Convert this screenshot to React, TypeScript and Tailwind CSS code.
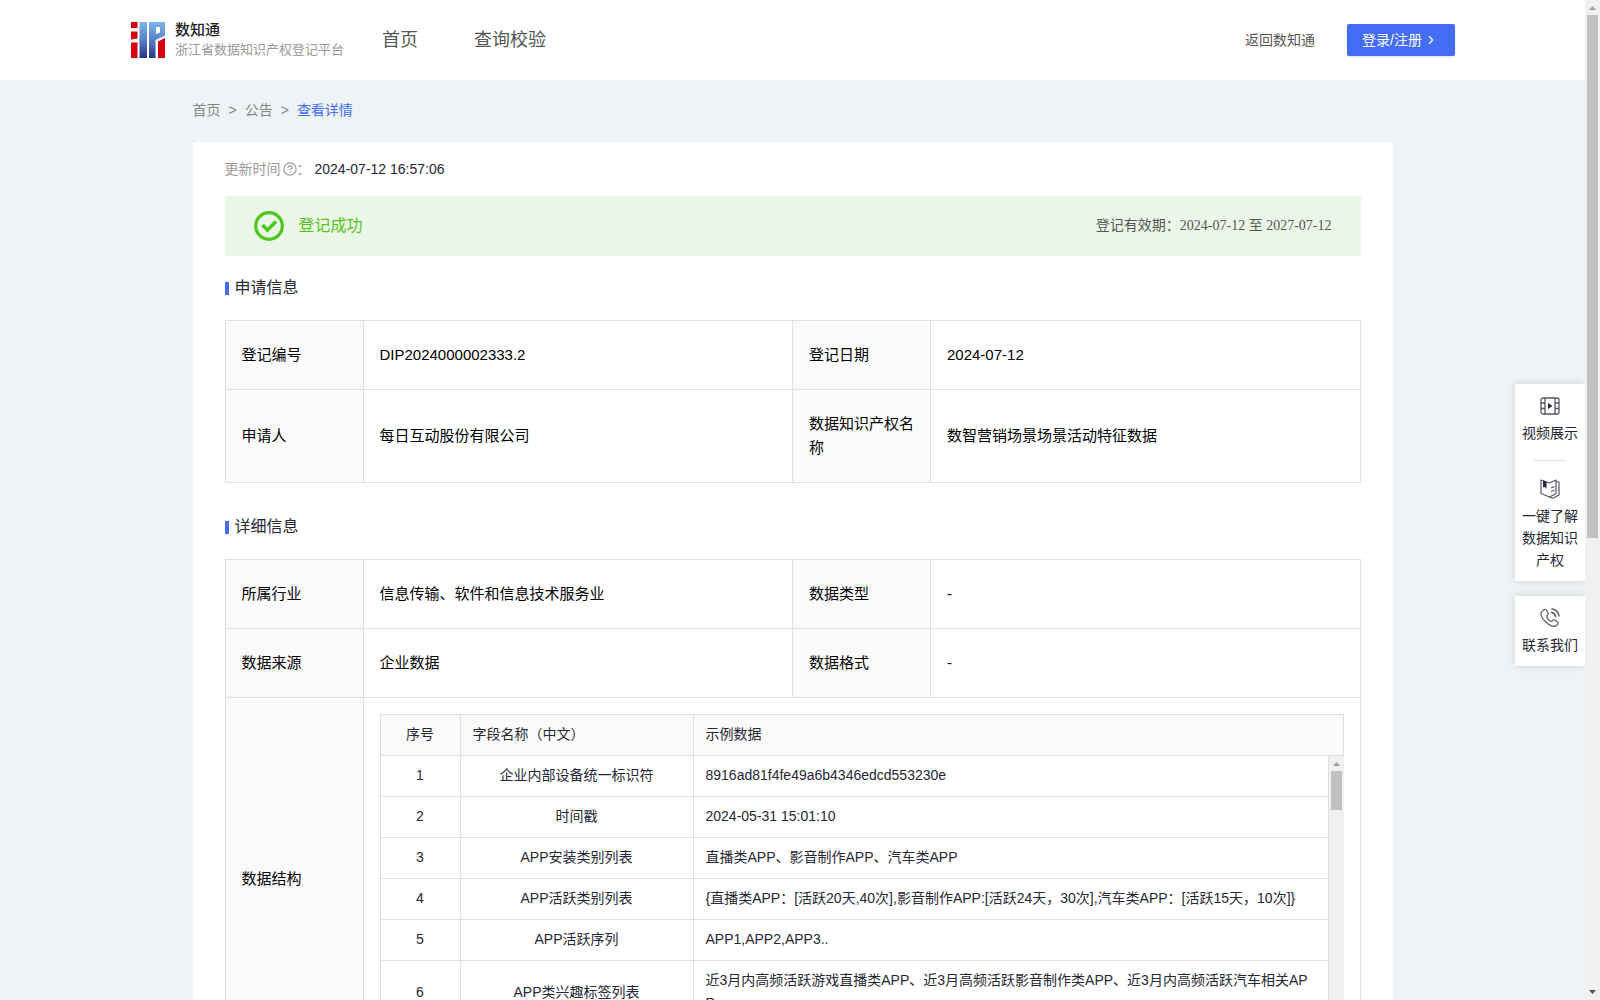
import React from 'react';
import { ChevronRight } from 'lucide-react';

const fields = [
  { name: '企业内部设备统一标识符', sample: '8916ad81f4fe49a6b4346edcd553230e' },
  { name: '时间戳', sample: '2024-05-31 15:01:10' },
  { name: 'APP安装类别列表', sample: '直播类APP、影音制作APP、汽车类APP' },
  { name: 'APP活跃类别列表', sample: '{直播类APP：[活跃20天,40次],影音制作APP:[活跃24天，30次],汽车类APP：[活跃15天，10次]}' },
  { name: 'APP活跃序列', sample: 'APP1,APP2,APP3..' },
  { name: 'APP类兴趣标签列表', sample: '近3月内高频活跃游戏直播类APP、近3月高频活跃影音制作类APP、近3月内高频活跃汽车相关APP' },
];

const Logo = () => (
  <svg viewBox="0 0 34 36" className="h-9 w-[34px] shrink-0" aria-hidden="true">
    <defs>
      <linearGradient id="logoBlue" gradientUnits="userSpaceOnUse" x1="0" y1="0" x2="0" y2="36">
        <stop offset="0" stopColor="#7fb4ee" />
        <stop offset="0.5" stopColor="#5580c6" />
        <stop offset="1" stopColor="#26378a" />
      </linearGradient>
    </defs>
    <path fill="#d7000f" d="M0 0h6.500v6H0zM0 9.500h6.500v7L0 17.500zM0 20.500h6.500V36H0z" />
    <path fill="url(#logoBlue)" d="M8.500 0h7.500v36H8.500z" />
    <path fill="url(#logoBlue)" fillRule="evenodd" d="M18 0h16v13.500l-9.500 4.500v18H18zM25 5v7l4-1.500V5z" />
    <path fill="#d7000f" d="M34 16v20h-7V19.500z" />
  </svg>
);

const VideoIcon = () => (
  <svg viewBox="0 0 20 20" className="h-5 w-5" fill="none" stroke="#55565f" strokeWidth="1.3" aria-hidden="true">
    <rect x="1" y="2" width="18" height="16" rx="2" />
    <path d="M5 2v16M15 2v16M1 7h4M1 12.500h4M15 7h4M15 12.500h4" />
    <path d="M8 7v6l4.500-3z" fill="#252733" stroke="none" />
  </svg>
);

const BookIcon = () => (
  <svg viewBox="0 0 20 20" className="h-5 w-5" fill="none" stroke="#55565f" strokeWidth="1.2" strokeLinejoin="round" aria-hidden="true">
    <path d="M1 1l8.500 3L16 1v13.500l-6.500 3.500L1 14.500z" />
    <path d="M16 2.500l3 .5v13l-6 3.300-3.500-1.300M11 9l3.500-1.500M11 12.500l3.500-1.500" />
    <path d="M3 1.500l3.500 1V10L5 8 3 8.500z" fill="#252733" stroke="none" />
  </svg>
);

const PhoneIcon = () => (
  <svg viewBox="0 0 20 20" className="h-5 w-5" fill="none" stroke="#55565f" strokeWidth="1.2" strokeLinecap="round" strokeLinejoin="round" aria-hidden="true">
    <path d="M3 2.500C5 .8 6 1.300 7 3l1 2c.6 1.300-.1 1.900-1 2.600-.8.7-.3 1.500.5 2.700 1 1.400 2.200 2.500 3.300 3 .9.400 1.300-.2 2-.9.800-.8 1.600-.7 2.500 0l2 1.500c1.200 1 1 2-.2 3.200-2 2-5 1.700-8.600-.9C3.500 12.500.8 8.500.9 5.500.9 4 1.800 3.400 3 2.500z" />
    <path d="M11.500 4.500c2 .3 3.700 2 4 4M12 1c3.700.2 6.800 3.300 7 7" strokeWidth="1.5" />
  </svg>
);

const Scrollbar = ({ thumb, arrowDown = false }: { thumb: string; arrowDown?: boolean }) => (
  <div className="flex w-[15px] shrink-0 flex-col items-center bg-[#f0f0f0]" aria-hidden="true">
    <svg viewBox="0 0 15 15" className="h-[15px] w-[15px]"><path d="M4 10l3.500-4L11 10z" fill="#a0a0a0" /></svg>
    <div className={`w-[11px] bg-[#c1c1c1] ${thumb}`} />
    {arrowDown && (
      <svg viewBox="0 0 15 15" className="mt-auto h-[15px] w-[15px]"><path d="M4 5l3.500 4L11 5z" fill="#505050" /></svg>
    )}
  </div>
);

const SectionTitle = ({ children }: { children: React.ReactNode }) => (
  <h2 className="flex items-center text-base leading-6 text-[#252733]">
    <span className="mr-1.5 h-[13px] w-1 bg-[#446df6]" />
    {children}
  </h2>
);

const Label = ({ children }: { children: React.ReactNode }) => (
  <th scope="row" className="border border-[#e0e0e2] bg-[#fafafa] px-4 py-[22px] text-left font-normal">
    {children}
  </th>
);

const Value = ({ children }: { children: React.ReactNode }) => (
  <td className="border border-[#e0e0e2] px-4 py-[22px]">{children}</td>
);

const Columns = () => (
  <colgroup>
    <col className="w-[138px]" />
    <col />
    <col className="w-[138px]" />
    <col />
  </colgroup>
);

const infoTable = 'w-full table-fixed border-collapse text-[15px] leading-6 text-black';

const App = () => {
  return (
    <div className="flex h-screen overflow-hidden bg-[#eef3f6] font-['Liberation_Sans','Noto_Sans_CJK_SC',sans-serif] text-sm text-[#252733]">
      <div className="relative min-w-0 flex-1 overflow-hidden">
        {/* Header */}
        <header className="flex h-20 items-center bg-white px-[130px]">
          <a href="#" className="ml-px flex items-center gap-2.5">
            <Logo />
            <span className="flex flex-col">
              <span className="text-[15px] font-medium leading-5 text-[#222]">数知通</span>
              <span className="text-[13px] leading-5 text-[#999]">浙江省数据知识产权登记平台</span>
            </span>
          </a>
          <nav className="ml-[38px] flex gap-14 text-lg text-[#555]">
            <a href="#">首页</a>
            <a href="#">查询校验</a>
          </nav>
          <div className="ml-auto flex items-center gap-8">
            <a href="#" className="text-[#555]">返回数知通</a>
            <button className="flex h-8 w-[108px] items-center rounded-xs bg-[#446df6] pl-[15px] text-white shadow-sm">
              登录/注册
              <ChevronRight className="ml-0.5 h-3.5 w-3.5" />
            </button>
          </div>
        </header>

        <main className="mx-auto max-w-[1200px]">
          {/* Breadcrumb */}
          <nav className="flex gap-2 pt-5 pb-[22px] leading-5 text-[#868686]">
            <a href="#">首页</a>
            <span>&gt;</span>
            <a href="#">公告</a>
            <span>&gt;</span>
            <a href="#" className="text-[#446df6]">查看详情</a>
          </nav>

          <div className="rounded bg-white px-8 pt-4">
            <div className="flex items-center leading-[22px]">
              <span className="text-[#999]">更新时间</span>
              <svg viewBox="0 0 16 16" className="ml-0.5 h-3.5 w-3.5" fill="none" stroke="#999" strokeWidth="1.4" aria-hidden="true">
                <circle cx="8" cy="8" r="7" />
                <path d="M5.800 6.500c0-3 4.400-2.800 4.400-.2C10.200 7.800 8 7.800 8 9.500M8 11v1.300" />
              </svg>
              <span className="text-[#999]">：</span>
              <span className="ml-1">2024-07-12 16:57:06</span>
            </div>

            {/* Status */}
            <div className="mt-4 flex h-[60px] items-center bg-[#ebf7e6] px-[29px]">
              <svg viewBox="0 0 30 30" className="h-[30px] w-[30px]" fill="none" stroke="#4dc61e" aria-hidden="true">
                <circle cx="15" cy="15" r="13.3" strokeWidth="3.2" />
                <path d="M8.500 14l5 5 8.500-8.500" strokeWidth="3.6" />
              </svg>
              <span className="ml-[15px] text-base text-[#52c41a]">登记成功</span>
              <span className="ml-auto font-['Liberation_Serif','Noto_Sans_CJK_SC',serif] text-[#555]">
                登记有效期：2024-07-12 至 2027-07-12
              </span>
            </div>

            <div className="pt-5 pb-5">
              <SectionTitle>申请信息</SectionTitle>
            </div>
            <table className={infoTable}>
              <Columns />
              <tbody>
                <tr>
                  <Label>登记编号</Label>
                  <Value>DIP2024000002333.2</Value>
                  <Label>登记日期</Label>
                  <Value>2024-07-12</Value>
                </tr>
                <tr>
                  <Label>申请人</Label>
                  <Value>每日互动股份有限公司</Value>
                  <Label>数据知识产权名称</Label>
                  <Value>数智营销场景场景活动特征数据</Value>
                </tr>
              </tbody>
            </table>

            <div className="pt-8 pb-5">
              <SectionTitle>详细信息</SectionTitle>
            </div>
            <table className={infoTable}>
              <Columns />
              <tbody>
                <tr>
                  <Label>所属行业</Label>
                  <Value>信息传输、软件和信息技术服务业</Value>
                  <Label>数据类型</Label>
                  <Value>-</Value>
                </tr>
                <tr>
                  <Label>数据来源</Label>
                  <Value>企业数据</Value>
                  <Label>数据格式</Label>
                  <Value>-</Value>
                </tr>
                <tr>
                  <Label>数据结构</Label>
                  <td colSpan={3} className="border border-[#e0e0e2] p-4">
                    <div className="text-sm leading-[23px] text-[#252733]">
                      <table className="w-full table-fixed border-collapse bg-[#fafafa]">
                        <thead>
                          <tr>
                            <th className="w-20 border border-[#e0e0e2] px-3 pt-2 pb-[9px] font-normal">序号</th>
                            <th className="w-[233px] border border-[#e0e0e2] px-3 pt-2 pb-[9px] text-left font-normal">字段名称（中文）</th>
                            <th className="border border-[#e0e0e2] px-3 pt-2 pb-[9px] text-left font-normal">示例数据</th>
                          </tr>
                        </thead>
                      </table>
                      <div className="flex h-72 overflow-hidden">
                        <div className="min-w-0 flex-1">
                          <table className="w-full table-fixed border-collapse">
                            <tbody>
                              {fields.map((field, i) => (
                                <tr key={field.name}>
                                  <td className="w-20 border border-t-0 border-[#e0e0e2] px-3 pt-2 pb-[9px] text-center">{i + 1}</td>
                                  <td className="w-[233px] border border-t-0 border-[#e0e0e2] px-3 pt-2 pb-[9px] text-center">{field.name}</td>
                                  <td className="border border-t-0 border-[#e0e0e2] px-3 pt-2 pb-[9px] break-all">{field.sample}</td>
                                </tr>
                              ))}
                            </tbody>
                          </table>
                        </div>
                        <Scrollbar thumb="h-[39px]" />
                      </div>
                    </div>
                  </td>
                </tr>
              </tbody>
            </table>
          </div>
        </main>

        {/* Floating shortcuts */}
        <aside className="absolute top-96 right-0 flex w-[70px] flex-col gap-[15px] text-center leading-[22px]">
          <div className="flex flex-col items-center bg-white px-1.5 pt-3 pb-2.5 shadow-[0_0_8px_rgba(0,0,0,0.15)]">
            <a href="#" className="flex flex-col items-center gap-1.5">
              <VideoIcon />
              视频展示
            </a>
            <hr className="mt-4 mb-[18px] w-8 border-[#e0e0e2]" />
            <a href="#" className="flex flex-col items-center gap-1.5">
              <BookIcon />
              一键了解数据知识产权
            </a>
          </div>
          <a href="#" className="flex flex-col items-center gap-1.5 bg-white px-1.5 pt-3 pb-2.5 shadow-[0_0_8px_rgba(0,0,0,0.15)]">
            <PhoneIcon />
            联系我们
          </a>
        </aside>
      </div>
      <Scrollbar thumb="h-[523px]" arrowDown />
    </div>
  );
};

export default App;
